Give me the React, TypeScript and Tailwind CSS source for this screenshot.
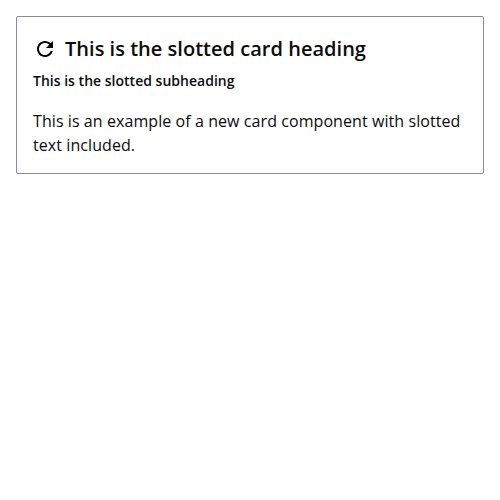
import React from "react";

function RefreshIcon() {
  return (
    <svg className="size-6 shrink-0" viewBox="0 0 24 24" fill="#000" aria-hidden="true">
      <path d="M17.65 6.35C16.2 4.9 14.21 4 12 4c-4.42 0-7.99 3.58-7.99 8s3.57 8 7.99 8c3.73 0 6.84-2.55 7.73-6h-2.08c-.82 2.33-3.04 4-5.65 4-3.31 0-6-2.69-6-6s2.69-6 6-6c1.66 0 3.14.69 4.22 1.78L13 11h7V4l-2.35 2.35z" />
    </svg>
  );
}

export default function App() {
  return (
    <main className="p-4 font-['Open_Sans',sans-serif] text-[#0b0c0c]">
      <article className="rounded-xs border border-[#8a8c9c] bg-white p-4">
        <h2 className="flex h-8 items-center gap-2 text-xl font-semibold tracking-[0.02px]">
          <RefreshIcon />
          This is the slotted card heading
        </h2>
        <h3 className="text-sm leading-8 font-semibold tracking-[0.01px]">This is the slotted subheading</h3>
        <p className="mt-3 text-base leading-6 tracking-[0.075px]">
          This is an example of a new card component with slotted text included.
        </p>
      </article>
    </main>
  );
}
